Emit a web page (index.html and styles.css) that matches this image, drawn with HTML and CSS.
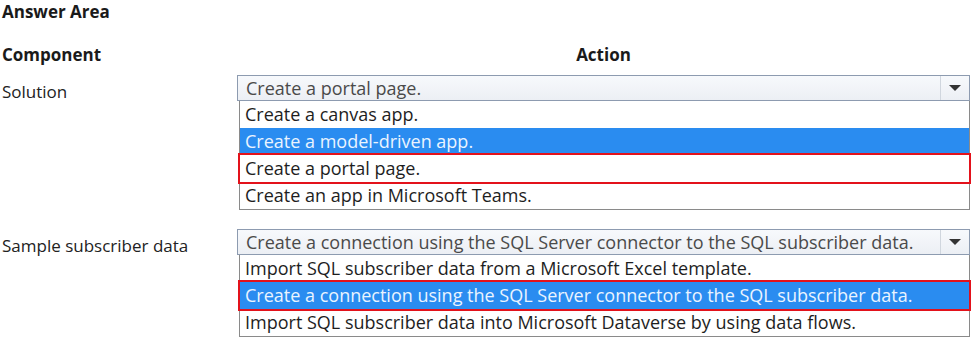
FILE: index.html
```html
<!DOCTYPE html>
<html lang="en">
<head>
    <meta charset="UTF-8">
    <title>Answer Area</title>
    <link rel="stylesheet" href="styles.css">
</head>
<body>

<div class="title">Answer Area</div>

<div class="answer-grid">
    <div class="col-head">Component</div>
    <div class="col-head action">Action</div>

    <div class="label">Solution</div>
    <div class="dropdown">
        <div class="select">
            <span class="select-text">Create a portal page.</span>
            <span class="arrow"></span>
        </div>
        <div class="options">
            <div class="option">Create a canvas app.</div>
            <div class="option highlighted">Create a model-driven app.</div>
            <div class="option answer">Create a portal page.</div>
            <div class="option">Create an app in Microsoft Teams.</div>
        </div>
    </div>

    <div class="label">Sample subscriber data</div>
    <div class="dropdown">
        <div class="select">
            <span class="select-text">Create a connection using the SQL Server connector to the SQL subscriber data.</span>
            <span class="arrow"></span>
        </div>
        <div class="options">
            <div class="option">Import SQL subscriber data from a Microsoft Excel template.</div>
            <div class="option highlighted answer">Create a connection using the SQL Server connector to the SQL subscriber data.</div>
            <div class="option">Import SQL subscriber data into Microsoft Dataverse by using data flows.</div>
        </div>
    </div>
</div>

</body>
</html>
```

FILE: styles.css
```css
body {
    font-family: 'Open Sans', sans-serif;
    margin: 0;
    padding: 0 2px;
    background-color: #ffffff;
    color: #1a1a1a;
    overflow: hidden;
}

.title {
    font-weight: 700;
    font-size: 17px;
    line-height: 23px;
}

.answer-grid {
    display: grid;
    grid-template-columns: 235px 733px;
    margin-top: 21px;
}

.col-head {
    font-weight: 700;
    font-size: 17px;
    line-height: 22px;
    margin-bottom: 9px;
}

.col-head.action {
    text-align: center;
}

.label {
    font-size: 17px;
    line-height: 22px;
    color: #222;
    padding-top: 6px;
}

.dropdown {
    margin-bottom: 19px;
}

.dropdown:last-child {
    margin-bottom: 0;
}

.select {
    display: flex;
    align-items: center;
    height: 24px;
    border: 1px solid #8d9bb0;
    background: linear-gradient(#f7f9fc, #eceff4);
    color: #4a4a4a;
    font-size: 18px;
}

.select-text {
    flex: 1;
    padding-left: 8px;
    white-space: nowrap;
}

.arrow {
    width: 28px;
    height: 24px;
    border-left: 1px solid #d0d6de;
    position: relative;
}

.arrow::after {
    content: '';
    position: absolute;
    left: 8px;
    top: 9px;
    border-left: 6px solid transparent;
    border-right: 6px solid transparent;
    border-top: 6px solid #333;
}

.options {
    margin-left: 2px;
    border: 1px solid #8a8a8a;
    border-top: none;
    background: #fff;
}

.option {
    height: 27px;
    line-height: 27px;
    font-size: 18px;
    padding-left: 5px;
    white-space: nowrap;
    color: #1e1e1e;
}

.option.highlighted {
    background-color: #2a8cf0;
    color: #eaf4ff;
}

.option.answer {
    outline: 2px solid #e3121b;
    outline-offset: 0;
    position: relative;
}
```
